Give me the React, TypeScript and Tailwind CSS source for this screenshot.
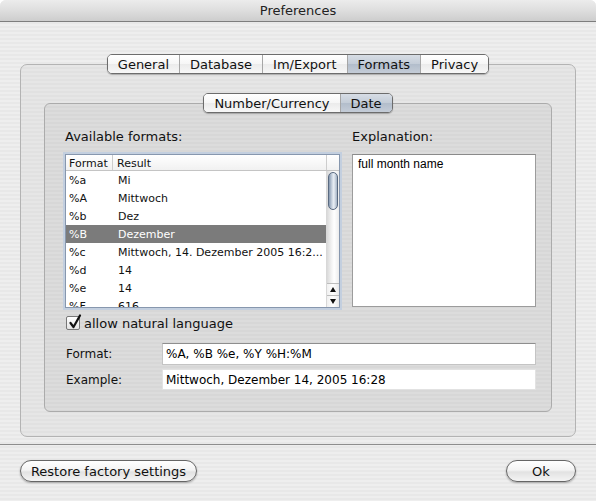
import React from "react";

const stripes =
  "bg-[image:repeating-linear-gradient(180deg,#eeeeee_0px,#eeeeee_2px,#e8e8e8_2px,#e8e8e8_4px)]";

const rows: [string, string][] = [
  ["%a", "Mi"],
  ["%A", "Mittwoch"],
  ["%b", "Dez"],
  ["%B", "Dezember"],
  ["%c", "Mittwoch, 14. Dezember 2005 16:2..."],
  ["%d", "14"],
  ["%e", "14"],
  ["%F", "616"],
];

const Segmented = ({ items, active }: { items: string[]; active: string }) => (
  <div className="flex h-[20px] rounded-[5px] border border-[#6c6c6c] overflow-hidden shadow-[0_1px_1px_rgba(0,0,0,0.25)]">
    {items.map((t, i) => (
      <div
        key={t}
        className={
          "flex items-center px-[10px] text-[13px] leading-none text-[#111] " +
          (i > 0 ? "border-l border-[#a6a6a6] " : "") +
          (t === active
            ? "bg-[linear-gradient(180deg,#d7dde5_0%,#c3ccd7_50%,#b2bdcb_51%,#c4ccd7_100%)]"
            : "bg-[linear-gradient(180deg,#ffffff_0%,#f6f6f6_50%,#ebebeb_51%,#f7f7f7_100%)]")
        }
      >
        {t}
      </div>
    ))}
  </div>
);

const PillButton = ({ label, w }: { label: string; w: string }) => (
  <button
    className={
      w +
      " h-[22px] rounded-full border border-[#666] text-[13px] text-[#111] leading-none bg-[linear-gradient(180deg,#ffffff_0%,#f4f4f4_45%,#e2e2e2_55%,#f4f4f4_100%)] shadow-[0_1px_2px_rgba(0,0,0,0.3)]"
    }
  >
    {label}
  </button>
);

const Scrollbar = () => (
  <div className="w-[13px] flex flex-col border-l border-[#d8d8d8] bg-[linear-gradient(90deg,#d9d9d9_0%,#f4f4f4_40%,#ffffff_60%,#ececec_100%)]">
    <div className="pt-[1px] px-[1px] flex-1">
      <div className="h-[38px] rounded-full border border-[#5a6a80] bg-[linear-gradient(90deg,#8598b0_0%,#cfd8e3_40%,#eaeff5_60%,#a3b2c4_100%)]" />
    </div>
    <div className="h-[12px] flex items-center justify-center border-t border-[#bdbdbd] bg-[linear-gradient(90deg,#f0f0f0,#ffffff,#e8e8e8)]">
      <svg width="6" height="5" viewBox="0 0 6 5">
        <path d="M3 0 L6 5 L0 5 Z" fill="#111" />
      </svg>
    </div>
    <div className="h-[12px] flex items-center justify-center border-t border-[#bdbdbd] bg-[linear-gradient(90deg,#f0f0f0,#ffffff,#e8e8e8)]">
      <svg width="6" height="5" viewBox="0 0 6 5">
        <path d="M0 0 L6 0 L3 5 Z" fill="#111" />
      </svg>
    </div>
  </div>
);

export default function App() {
  return (
    <div className="w-[596px] h-[501px] bg-white font-['DejaVu_Sans',sans-serif] text-[#111]">
      <div className={"h-full flex flex-col rounded-t-[6px] overflow-hidden " + stripes}>
        {/* title bar */}
        <div className="h-[22px] shrink-0 flex items-center justify-center border-b border-[#7d7d7d] bg-[linear-gradient(180deg,#ececec_0%,#dedede_50%,#cdcdcd_100%)] text-[13px] text-[#222]">
          Preferences
        </div>

        <div className="px-[20px] pt-[32px]">
          <div className="relative z-10 flex justify-center">
            <Segmented
              items={["General", "Database", "Im/Export", "Formats", "Privacy"]}
              active="Formats"
            />
          </div>
          <div className="-mt-[10px] h-[373px] rounded-[7px] border border-[#b3b3b3] bg-[image:repeating-linear-gradient(180deg,#e6e6e6_0px,#e6e6e6_2px,#e1e1e1_2px,#e1e1e1_4px)] pt-[28px] px-[23px]">
            <div className="relative z-10 flex justify-center">
              <Segmented items={["Number/Currency", "Date"]} active="Date" />
            </div>
            <div className="-mt-[10px] h-[309px] rounded-[6px] border border-[#ababab] bg-[image:repeating-linear-gradient(180deg,#dcdcdc_0px,#dcdcdc_2px,#d7d7d7_2px,#d7d7d7_4px)] pt-[25px] pl-[20px] pr-[15px]">
              <div className="flex gap-[12px]">
                <div className="w-[275px]">
                  <div className="h-[16px] text-[13px] leading-[16px]">Available formats:</div>
                  <div className="mt-[9px] h-[154px] border border-[#8797ae] shadow-[0_0_0_2px_#c3cfdf] bg-white flex flex-col overflow-hidden">
                    <div className="h-[16px] shrink-0 flex text-[11px] leading-[17px] border-b border-[#c4c4c4] bg-[linear-gradient(180deg,#ffffff,#f1f1f1)]">
                      <div className="w-[47px] pl-[3px] border-r border-[#cdcdcd]">Format</div>
                      <div className="flex-1 pl-[4px] border-r border-[#cdcdcd]">Result</div>
                      <div className="w-[12px]" />
                    </div>
                    <div className="flex flex-1 min-h-0">
                      <div className="flex-1 overflow-hidden">
                        {rows.map(([f, r]) => (
                          <div
                            key={f}
                            className={
                              "h-[18px] flex items-center pt-[2px] text-[11px] whitespace-nowrap " +
                              (f === "%B" ? "bg-[#7b7b7b] text-white" : "")
                            }
                          >
                            <div className="w-[47px] pl-[3px]">{f}</div>
                            <div className="flex-1 pl-[5px] overflow-hidden">{r}</div>
                          </div>
                        ))}
                      </div>
                      <Scrollbar />
                    </div>
                  </div>
                </div>
                <div className="w-[184px]">
                  <div className="h-[16px] text-[13px] leading-[16px]">Explanation:</div>
                  <div className="mt-[9px] h-[153px] border border-[#9c9c9c] border-t-[#8a8a8a] bg-white px-[5px] font-['Liberation_Sans',sans-serif] text-[12px] text-black">
                    full month name
                  </div>
                </div>
              </div>

              <div className="mt-[8px] h-[14px] flex items-center gap-[4px] pl-[1px]">
                <div className="relative w-[14px] h-[14px] rounded-[2px] border border-[#777] bg-[linear-gradient(180deg,#ffffff,#e4e4e4)]">
                  <svg
                    className="absolute -top-[3px] left-[1px]"
                    width="14"
                    height="16"
                    viewBox="0 0 14 16"
                  >
                    <path
                      d="M2.5 9 L5.5 13 L12 1.5"
                      fill="none"
                      stroke="#111"
                      strokeWidth="2.2"
                      strokeLinecap="round"
                      strokeLinejoin="round"
                    />
                  </svg>
                </div>
                <span className="text-[13px] leading-none">allow natural language</span>
              </div>

              <div className="mt-[13px] flex items-center">
                <div className="w-[97px] pl-[1px] text-[12px]">Format:</div>
                <div className="w-[374px] h-[22px] border border-[#c4c4c4] border-t-[#8e8e8e] bg-white px-[3px] flex items-center text-[12px] text-black">
                  %A, %B %e, %Y %H:%M
                </div>
              </div>
              <div className="mt-[4px] flex items-center">
                <div className="w-[97px] pl-[1px] text-[12px]">Example:</div>
                <div className="w-[374px] h-[21px] border border-[#e2e2e2] bg-white px-[3px] flex items-center text-[12px] text-black">
                  Mittwoch, Dezember 14, 2005 16:28
                </div>
              </div>
            </div>
          </div>
        </div>

        <div className="mt-[7px] border-t border-[#8e8e8e]" />
        <div className="px-[20px] pt-[15px] flex justify-between">
          <PillButton label="Restore factory settings" w="w-[177px]" />
          <PillButton label="Ok" w="w-[70px]" />
        </div>
      </div>
    </div>
  );
}
